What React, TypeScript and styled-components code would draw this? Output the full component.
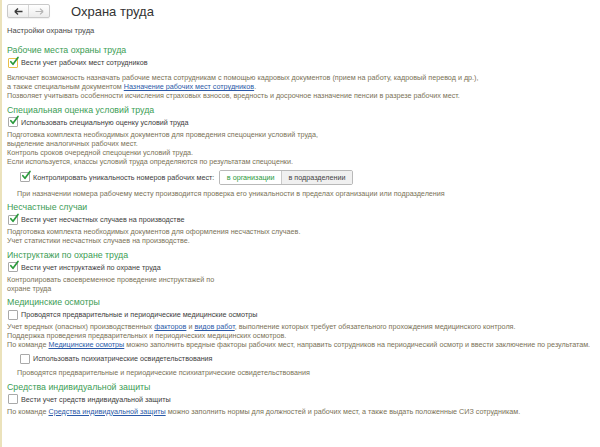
import React from 'react'
import styled, { createGlobalStyle } from 'styled-components'

const GlobalStyle = createGlobalStyle`
  html, body {
    margin: 0;
    padding: 0;
    background: #ffffff;
  }
  body {
    font-family: 'Liberation Sans', Arial, sans-serif;
  }
`

type Part = string | { link: string }

type CheckItem = {
  label: string
  checked: boolean
  focused?: boolean
}

type Section = {
  title: string
  check: CheckItem
  lines: Part[][]
  sub?: {
    check: CheckItem
    choice?: string[]
    lines: Part[][]
  }
}

const sections: Section[] = [
  {
    title: 'Рабочие места охраны труда',
    check: { label: 'Вести учет рабочих мест сотрудников', checked: true, focused: true },
    lines: [
      ['Включает возможность назначать рабочие места сотрудникам с помощью кадровых документов (прием на работу, кадровый перевод и др.),'],
      ['а также специальным документом ', { link: 'Назначение рабочих мест сотрудников' }, '.'],
      ['Позволяет учитывать особенности исчисления страховых взносов, вредность и досрочное назначение пенсии в разрезе рабочих мест.'],
    ],
  },
  {
    title: 'Специальная оценка условий труда',
    check: { label: 'Использовать специальную оценку условий труда', checked: true },
    lines: [
      ['Подготовка комплекта необходимых документов для проведения спецоценки условий труда,'],
      ['выделение аналогичных рабочих мест.'],
      ['Контроль сроков очередной спецоценки условий труда.'],
      ['Если используется, классы условий труда определяются по результатам спецоценки.'],
    ],
    sub: {
      check: { label: 'Контролировать уникальность номеров рабочих мест:', checked: true },
      choice: ['в организации', 'в подразделении'],
      lines: [
        ['При назначении номера рабочему месту производится проверка его уникальности в пределах организации или подразделения'],
      ],
    },
  },
  {
    title: 'Несчастные случаи',
    check: { label: 'Вести учет несчастных случаев на производстве', checked: true },
    lines: [
      ['Подготовка комплекта необходимых документов для оформления несчастных случаев.'],
      ['Учет статистики несчастных случаев на производстве.'],
    ],
  },
  {
    title: 'Инструктажи по охране труда',
    check: { label: 'Вести учет инструктажей по охране труда', checked: true },
    lines: [['Контролировать своевременное проведение инструктажей по'], ['охране труда']],
  },
  {
    title: 'Медицинские осмотры',
    check: { label: 'Проводятся предварительные и периодические медицинские осмотры', checked: false },
    lines: [
      [
        'Учет вредных (опасных) производственных ',
        { link: 'факторов' },
        ' и ',
        { link: 'видов работ' },
        ', выполнение которых требует обязательного прохождения медицинского контроля.',
      ],
      ['Поддержка проведения предварительных и периодических медицинских осмотров.'],
      [
        'По команде ',
        { link: 'Медицинские осмотры' },
        ' можно заполнить вредные факторы рабочих мест, направить сотрудников на периодический осмотр и ввести заключение по результатам.',
      ],
    ],
    sub: {
      check: { label: 'Использовать психиатрические освидетельствования', checked: false },
      lines: [['Проводятся предварительные и периодические психиатрические освидетельствования']],
    },
  },
  {
    title: 'Средства индивидуальной защиты',
    check: { label: 'Вести учет средств индивидуальной защиты', checked: false },
    lines: [
      [
        'По команде ',
        { link: 'Средства индивидуальной защиты' },
        ' можно заполнить нормы для должностей и рабочих мест, а также выдать положенные СИЗ сотрудникам.',
      ],
    ],
  },
]

const Checkbox = ({ checked, focused }: { checked: boolean; focused?: boolean }) => (
  <StyledBox $focused={focused}>
    {checked && (
      <StyledTick viewBox='0 0 12 12'>
        <path d='M2.2 5.6 L4.8 8.8 L10.8 0.6' fill='none' stroke='#2a9a3c' strokeWidth='2' strokeLinecap='round' strokeLinejoin='round' />
      </StyledTick>
    )}
  </StyledBox>
)

const Lines = ({ lines, indent }: { lines: Part[][]; indent?: boolean }) => (
  <StyledDesc $indent={indent}>
    {lines.map((line, i) => (
      <StyledLine key={i}>
        {line.map((p, j) => (typeof p === 'string' ? <span key={j}>{p}</span> : <StyledLink key={j}>{p.link}</StyledLink>))}
      </StyledLine>
    ))}
  </StyledDesc>
)

const App = () => {
  return (
    <>
      <GlobalStyle />
      <StyledPage>
        <StyledHeader>
          <StyledNav>
            <StyledNavButton>
              <svg width='9' height='7' viewBox='0 0 9 7'>
                <path d='M0.8 3.5 L4 0.6 M0.8 3.5 L4 6.4 M0.8 3.5 H8.5' stroke='#3a3a3a' strokeWidth='1.4' fill='none' />
              </svg>
            </StyledNavButton>
            <StyledNavButton $divider>
              <svg width='9' height='7' viewBox='0 0 9 7'>
                <path d='M8.2 3.5 L5 0.6 M8.2 3.5 L5 6.4 M8.2 3.5 H0.5' stroke='#b4b4b4' strokeWidth='1.2' fill='none' />
              </svg>
            </StyledNavButton>
          </StyledNav>
          <StyledTitle>Охрана труда</StyledTitle>
        </StyledHeader>

        <StyledSubtitle>Настройки охраны труда</StyledSubtitle>

        {sections.map((s, idx) => (
          <StyledSection key={s.title} $first={idx === 0}>
            <StyledHeading>{s.title}</StyledHeading>
            <StyledCheckRow $focused={s.check.focused}>
              <Checkbox checked={s.check.checked} focused={s.check.focused} />
              <StyledLabel>{s.check.label}</StyledLabel>
            </StyledCheckRow>
            <Lines lines={s.lines} />
            {s.sub && (
              <>
                <StyledCheckRow $indent>
                  <Checkbox checked={s.sub.check.checked} />
                  <StyledLabel>{s.sub.check.label}</StyledLabel>
                  {s.sub.choice && (
                    <StyledChoice>
                      {s.sub.choice.map((c, i) => (
                        <StyledChoiceItem key={c} $active={i === 0}>
                          {c}
                        </StyledChoiceItem>
                      ))}
                    </StyledChoice>
                  )}
                </StyledCheckRow>
                <Lines lines={s.sub.lines} indent />
              </>
            )}
          </StyledSection>
        ))}
      </StyledPage>
    </>
  )
}

export default App

const StyledPage = styled.div`
  width: 600px;
  height: 447px;
  overflow: hidden;
  border-left: 2px solid #ebe2bb;
  background: #ffffff;
  padding-left: 5px;
  box-sizing: border-box;
`
const StyledHeader = styled.div`
  display: flex;
  align-items: center;
  height: 22px;
`
const StyledNav = styled.div`
  display: flex;
  height: 12px;
  border: 1px solid #c9c9c9;
  border-radius: 2px;
  background: linear-gradient(#ffffff, #ececec);
  box-shadow: 0 1px 1px rgba(0, 0, 0, 0.06);
`
const StyledNavButton = styled.div<{ $divider?: boolean }>`
  width: 20px;
  display: flex;
  align-items: center;
  justify-content: center;
  border-left: ${({ $divider }) => ($divider ? '1px solid #d6d6d6' : 'none')};
`
const StyledTitle = styled.div`
  margin-left: 21px;
  font-size: 13px;
  color: #333333;
`
const StyledSubtitle = styled.div`
  margin-top: 3.5px;
  font-size: 7.6px;
  line-height: 9px;
  color: #474747;
`
const StyledSection = styled.div<{ $first?: boolean }>`
  display: flex;
  flex-direction: column;
  margin-top: ${({ $first }) => ($first ? '6px' : '0')};
`
const StyledHeading = styled.div`
  margin-top: 4.5px;
  font-size: 8.8px;
  line-height: 11px;
  color: #3c9d55;
`
const StyledCheckRow = styled.div<{ $indent?: boolean; $focused?: boolean }>`
  display: flex;
  align-items: center;
  min-height: 11px;
  margin-top: ${({ $indent }) => ($indent ? '4px' : '1px')};
  margin-bottom: ${({ $focused }) => ($focused ? '3px' : '0')};
  padding-left: ${({ $indent }) => ($indent ? '13px' : '1px')};
`
const StyledBox = styled.div<{ $focused?: boolean }>`
  position: relative;
  width: 8px;
  height: 8px;
  border: 1px solid ${({ $focused }) => ($focused ? '#e8c04a' : '#a9a9a9')};
  border-radius: 1px;
  background: #ffffff;
  flex-shrink: 0;
`
const StyledTick = styled.svg`
  position: absolute;
  left: 0;
  top: -2px;
  width: 10px;
  height: 10px;
  overflow: visible;
`
const StyledLabel = styled.span`
  margin-left: 3px;
  font-size: 7.2px;
  color: #3d3d3d;
  white-space: nowrap;
`
const StyledChoice = styled.div`
  display: flex;
  margin-left: 5px;
  height: 13px;
  border: 1px solid #b9b9b9;
  border-radius: 2px;
  overflow: hidden;
`
const StyledChoiceItem = styled.div<{ $active?: boolean }>`
  display: flex;
  align-items: center;
  padding: 0 6.5px;
  font-size: 7.2px;
  color: ${({ $active }) => ($active ? '#2a9a3c' : '#444444')};
  background: ${({ $active }) => ($active ? '#ffffff' : '#f0f0f0')};
  border-left: ${({ $active }) => ($active ? 'none' : '1px solid #c9c9c9')};
`
const StyledDesc = styled.div<{ $indent?: boolean }>`
  margin-top: ${({ $indent }) => ($indent ? '4px' : '2px')};
  padding-left: ${({ $indent }) => ($indent ? '10px' : '0')};
  font-size: 7.2px;
  line-height: 9px;
  color: #7a7257;
`
const StyledLine = styled.div`
  white-space: nowrap;
`
const StyledLink = styled.span`
  color: #2b5aa8;
  text-decoration: underline;
`
